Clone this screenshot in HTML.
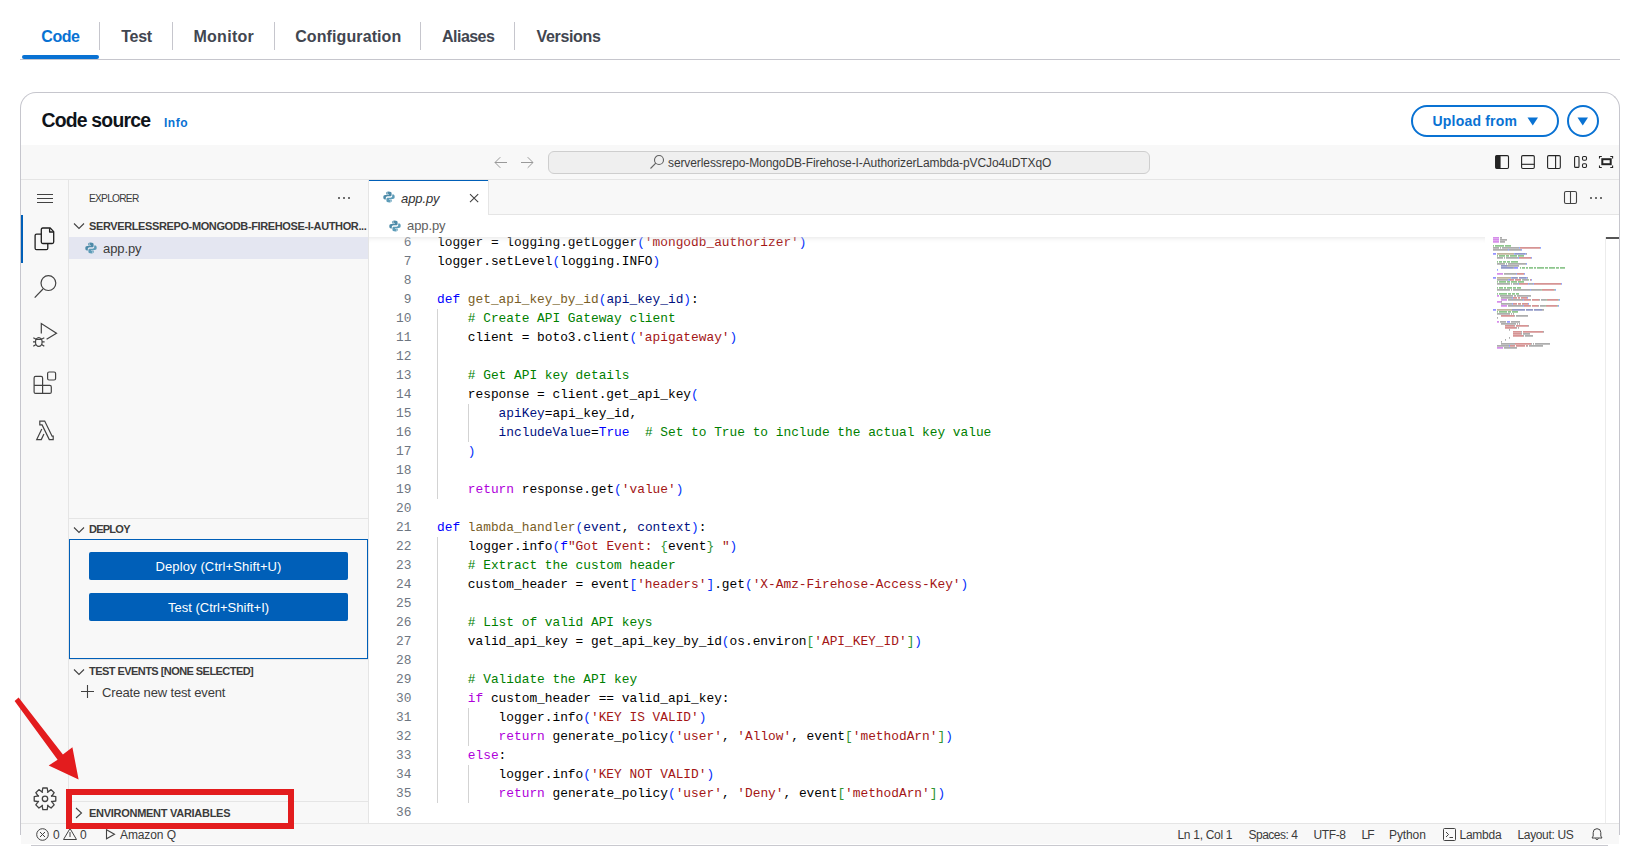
<!DOCTYPE html>
<html><head><meta charset="utf-8"><style>
html,body{margin:0;padding:0;background:#fff;}
body{width:1636px;height:859px;position:relative;overflow:hidden;font-family:"Liberation Sans", sans-serif;}
.t{position:absolute;white-space:pre;}
.code{position:absolute;font-family:"Liberation Mono", monospace;white-space:pre;}
</style></head><body>
<div class="t" style="left:41.3px;top:28.86px;font-size:16px;line-height:16px;color:#0972d3;font-weight:bold;letter-spacing:-0.45px;font-style:normal;">Code</div>
<div class="t" style="left:121.3px;top:28.86px;font-size:16px;line-height:16px;color:#424650;font-weight:bold;letter-spacing:-0.3px;font-style:normal;">Test</div>
<div class="t" style="left:193.4px;top:28.86px;font-size:16px;line-height:16px;color:#424650;font-weight:bold;letter-spacing:0.3px;font-style:normal;">Monitor</div>
<div class="t" style="left:295.2px;top:28.86px;font-size:16px;line-height:16px;color:#424650;font-weight:bold;letter-spacing:0.1px;font-style:normal;">Configuration</div>
<div class="t" style="left:442.1px;top:28.86px;font-size:16px;line-height:16px;color:#424650;font-weight:bold;letter-spacing:-0.55px;font-style:normal;">Aliases</div>
<div class="t" style="left:536.6px;top:28.86px;font-size:16px;line-height:16px;color:#424650;font-weight:bold;letter-spacing:-0.35px;font-style:normal;">Versions</div>
<div style="position:absolute;left:99px;top:22px;width:1px;height:28px;background:#c6c6cd;"></div>
<div style="position:absolute;left:172px;top:22px;width:1px;height:28px;background:#c6c6cd;"></div>
<div style="position:absolute;left:274px;top:22px;width:1px;height:28px;background:#c6c6cd;"></div>
<div style="position:absolute;left:420px;top:22px;width:1px;height:28px;background:#c6c6cd;"></div>
<div style="position:absolute;left:514px;top:22px;width:1px;height:28px;background:#c6c6cd;"></div>
<div style="position:absolute;left:20px;top:59px;width:1600px;height:1px;background:#c6c6cd;"></div>
<div style="position:absolute;left:22px;top:55px;width:77px;height:4px;background:#0972d3;border-radius:2px"></div>
<div style="position:absolute;left:20px;top:92px;width:1598px;height:742px;border:1px solid #c6c6cd;border-bottom:none;border-radius:16px 16px 0 0;background:#fff"></div>
<div class="t" style="left:41.5px;top:111.18px;font-size:19.4px;line-height:19.4px;color:#0f141a;font-weight:bold;letter-spacing:-0.8px;font-style:normal;">Code source</div>
<div class="t" style="left:164.0px;top:116.54px;font-size:12px;line-height:12px;color:#0972d3;font-weight:bold;letter-spacing:0.5px;font-style:normal;">Info</div>
<div style="position:absolute;left:1411px;top:105px;width:144px;height:28px;border:2px solid #0972d3;border-radius:16px"></div>
<div class="t" style="left:1432.5px;top:113.85px;font-size:14px;line-height:14px;color:#0972d3;font-weight:bold;letter-spacing:0.2px;font-style:normal;">Upload from</div>
<svg style="position:absolute;left:1527px;top:117px" width="12" height="9"><path d="M0.5 0.5 H11 L5.75 8.5 Z" fill="#0972d3"/></svg>
<div style="position:absolute;left:1567px;top:105px;width:28px;height:28px;border:2px solid #0972d3;border-radius:50%"></div>
<svg style="position:absolute;left:1577px;top:117px" width="12" height="9"><path d="M0.5 0.5 H11 L5.75 8.5 Z" fill="#0972d3"/></svg>
<div style="position:absolute;left:21px;top:145px;width:1598px;height:678px;background:#f8f8f8;"></div>
<div style="position:absolute;left:21px;top:179px;width:1598px;height:1px;background:#e5e5e5;"></div>
<svg style="position:absolute;left:492px;top:154px" width="46" height="18" fill="none" stroke="#999" stroke-width="1"><path d="M3 8.5 H15 M3 8.5 L8.3 3.2 M3 8.5 L8.3 13.8"/><path d="M29 8.5 H41 M41 8.5 L35.7 3.2 M41 8.5 L35.7 13.8"/></svg>
<div style="position:absolute;left:548px;top:151px;width:600px;height:21px;border:1px solid #cecece;border-radius:6px;background:#efefef"></div>
<svg style="position:absolute;left:649px;top:154px" width="16" height="16" fill="none" stroke="#616161" stroke-width="1.1"><circle cx="10" cy="6" r="4.5"/><path d="M6.8 9.2 L1.5 14.5"/></svg>
<div class="t" style="left:668.0px;top:157.14px;font-size:12px;line-height:12px;color:#3b3b3b;font-weight:normal;letter-spacing:-0.1px;font-style:normal;">serverlessrepo-MongoDB-Firehose-I-AuthorizerLambda-pVCJo4uDTXqO</div>
<svg style="position:absolute;left:1490px;top:150px" width="130" height="25" fill="none" stroke="#242424" stroke-width="1.1">
<rect x="5.6" y="5.6" width="12.9" height="12.9" rx="1.2"/><rect x="5.6" y="5.6" width="5" height="12.9" fill="#242424" stroke="none" rx="0.8"/>
<rect x="31.6" y="5.6" width="12.7" height="12.9" rx="1.2"/><path d="M31.6 14.3 H44.3"/>
<rect x="57.6" y="5.6" width="12.7" height="12.9" rx="1.2"/><path d="M65.6 5.6 V18.5"/>
<rect x="84.6" y="6.5" width="4.4" height="10.9" rx="1"/><rect x="92.5" y="6.5" width="4" height="3.8" rx="1.2"/><rect x="92.5" y="13.7" width="4" height="3.8" rx="1.2"/>
<path d="M109.5 8.5 V6.5 H111.8 M120.3 6.5 H122.6 V8.5 M122.6 15.5 V17.5 H120.3 M111.8 17.5 H109.5 V15.5"/><rect x="112.3" y="9.2" width="8.4" height="5" stroke-width="2"/>
</svg>
<div style="position:absolute;left:68px;top:180px;width:1px;height:643px;background:#e5e5e5;"></div>
<div style="position:absolute;left:368px;top:180px;width:1px;height:643px;background:#e5e5e5;"></div>
<div style="position:absolute;left:21px;top:215px;width:2px;height:48px;background:#005fb8;"></div>
<svg style="position:absolute;left:36px;top:192px" width="18" height="13" fill="none" stroke="#424242" stroke-width="1.1"><path d="M1 2.5 H17 M1 6.5 H17 M1 10.5 H17"/></svg>
<svg style="position:absolute;left:28px;top:222px" width="34" height="34" fill="none" stroke="#1f1f1f" stroke-width="1.3" stroke-linejoin="round"><path d="M13.3 12.1 H8.6 Q7.1 12.1 7.1 13.6 V26.2 Q7.1 27.7 8.6 27.7 H18.3 Q19.8 27.7 19.8 26.2 V21.5"/><path d="M14.8 6 H22.2 L25.7 9.6 V20 Q25.7 21.5 24.2 21.5 H14.8 Q13.3 21.5 13.3 20 V7.5 Q13.3 6 14.8 6 Z"/><path d="M21.6 6.2 V10 H25.5"/></svg>
<svg style="position:absolute;left:28px;top:270px" width="34" height="34" fill="none" stroke="#424242" stroke-width="1.2"><circle cx="20.4" cy="13.1" r="7.4"/><path d="M15 19 L6.7 27.6"/></svg>
<svg style="position:absolute;left:28px;top:318px" width="34" height="34" fill="none" stroke="#424242" stroke-width="1.2"><path d="M13.3 15.4 V5.6 L28.5 15.2 L18.6 21.3"/><ellipse cx="10.8" cy="24" rx="3.3" ry="4.4"/><path d="M7.7 21.4 H13.9"/><path d="M5.3 19.8 L8.2 21.2 M16.3 19.8 L13.4 21.2 M5 23.9 H7.5 M14.1 23.9 H16.6 M5.3 28.3 L8 26.4 M16.3 28.3 L13.6 26.4"/></svg>
<svg style="position:absolute;left:28px;top:366px" width="34" height="34" fill="none" stroke="#424242" stroke-width="1.2" stroke-linejoin="round"><path d="M7.6 10.4 H13.1 Q14.6 10.4 14.6 11.9 V19.4 H21.8 Q23.3 19.4 23.3 20.9 V25.9 Q23.3 27.4 21.8 27.4 H7.6 Q6.1 27.4 6.1 25.9 V11.9 Q6.1 10.4 7.6 10.4 Z"/><path d="M6.1 19.4 H14.6 V27.4"/><rect x="19.6" y="6" width="8" height="8" rx="1.5"/></svg>
<svg style="position:absolute;left:28px;top:414px" width="34" height="34" fill="none" stroke="#424242" stroke-width="1.2" stroke-linejoin="miter"><path d="M11.8 7.1 H16.7 L24.1 22.2 H25.2 V25.6 H21.3 L14.1 10.9 H11.8 Z"/><path d="M13.8 14.9 L8.7 25.6 H13.3 L15.9 19.9"/></svg>
<svg style="position:absolute;left:28px;top:782px" width="34" height="34" fill="none" stroke="#424242" stroke-width="1.3" stroke-linejoin="round"><path d="M14.10 10.32 L14.80 6.02 L19.20 6.02 L19.90 10.32 L19.53 10.17 L23.07 7.62 L26.18 10.73 L23.63 14.27 L23.48 13.90 L27.78 14.60 L27.78 19.00 L23.48 19.70 L23.63 19.33 L26.18 22.87 L23.07 25.98 L19.53 23.43 L19.90 23.28 L19.20 27.58 L14.80 27.58 L14.10 23.28 L14.47 23.43 L10.93 25.98 L7.82 22.87 L10.37 19.33 L10.52 19.70 L6.22 19.00 L6.22 14.60 L10.52 13.90 L10.37 14.27 L7.82 10.73 L10.93 7.62 L14.47 10.17 Z"/><circle cx="17" cy="16.8" r="2.7"/></svg>
<div class="t" style="left:89.0px;top:194.17px;font-size:10.2px;line-height:10.2px;color:#3b3b3b;font-weight:normal;letter-spacing:-0.75px;font-style:normal;">EXPLORER</div>
<svg style="position:absolute;left:337px;top:196px" width="16" height="4"><circle cx="2" cy="2" r="1" fill="#424242"/><circle cx="7" cy="2" r="1" fill="#424242"/><circle cx="12" cy="2" r="1" fill="#424242"/></svg>
<svg style="position:absolute;left:73px;top:222px" width="12" height="8" fill="none" stroke="#424242" stroke-width="1.1"><path d="M1 1.5 L6 6.5 L11 1.5"/></svg>
<div class="t" style="left:89.0px;top:220.69px;font-size:11px;line-height:11px;color:#3b3b3b;font-weight:bold;letter-spacing:-0.38px;font-style:normal;">SERVERLESSREPO-MONGODB-FIREHOSE-I-AUTHOR...</div>
<div style="position:absolute;left:69px;top:237px;width:299px;height:22px;background:#e4e6f1;"></div>
<svg style="position:absolute;left:85px;top:242px" width="12" height="12" viewBox="0 0 12 12">
<path d="M5.5 0.5 C3.5 0.5 3.3 1.4 3.3 2.2 V3.4 H6 V4 H2.2 C1 4 0.3 4.8 0.3 6.2 C0.3 7.8 1 8.4 2 8.4 H2.8 V7 C2.8 6 3.6 5.3 4.5 5.3 H7.2 C8 5.3 8.6 4.7 8.6 3.9 V2.2 C8.6 1.3 7.8 0.5 5.5 0.5 Z" fill="#4d8aa8"/>
<path d="M6.5 11.5 C8.5 11.5 8.7 10.6 8.7 9.8 V8.6 H6 V8 H9.8 C11 8 11.7 7.2 11.7 5.8 C11.7 4.2 11 3.6 10 3.6 H9.2 V5 C9.2 6 8.4 6.7 7.5 6.7 H4.8 C4 6.7 3.4 7.3 3.4 8.1 V9.8 C3.4 10.7 4.2 11.5 6.5 11.5 Z" fill="#5d9cb8"/>
<circle cx="4.6" cy="1.9" r="0.5" fill="#fff"/><circle cx="7.4" cy="10.1" r="0.5" fill="#fff"/></svg>
<div class="t" style="left:103.0px;top:241.60px;font-size:13px;line-height:13px;color:#3b3b3b;font-weight:normal;letter-spacing:-0.1px;font-style:normal;">app.py</div>
<div style="position:absolute;left:69px;top:518px;width:299px;height:1px;background:#e5e5e5;"></div>
<svg style="position:absolute;left:73px;top:526px" width="12" height="8" fill="none" stroke="#424242" stroke-width="1.1"><path d="M1 1.5 L6 6.5 L11 1.5"/></svg>
<div class="t" style="left:89.0px;top:524.09px;font-size:11px;line-height:11px;color:#3b3b3b;font-weight:bold;letter-spacing:-0.75px;font-style:normal;">DEPLOY</div>
<div style="position:absolute;left:69px;top:539px;width:297px;height:118px;border:1px solid #005fb8"></div>
<div style="position:absolute;left:89px;top:552px;width:259px;height:28px;background:#005fb8;border-radius:2px"></div>
<div style="position:absolute;left:89px;top:593px;width:259px;height:28px;background:#005fb8;border-radius:2px"></div>
<div class="t" style="left:155.5px;top:559.80px;font-size:13px;line-height:13px;color:#fff;font-weight:normal;letter-spacing:0.12px;font-style:normal;">Deploy (Ctrl+Shift+U)</div>
<div class="t" style="left:168.0px;top:600.60px;font-size:13px;line-height:13px;color:#fff;font-weight:normal;letter-spacing:0px;font-style:normal;">Test (Ctrl+Shift+I)</div>
<div style="position:absolute;left:69px;top:659px;width:299px;height:1px;background:#e5e5e5;"></div>
<svg style="position:absolute;left:73px;top:668px" width="12" height="8" fill="none" stroke="#424242" stroke-width="1.1"><path d="M1 1.5 L6 6.5 L11 1.5"/></svg>
<div class="t" style="left:89.0px;top:665.69px;font-size:11px;line-height:11px;color:#3b3b3b;font-weight:bold;letter-spacing:-0.55px;font-style:normal;">TEST EVENTS [NONE SELECTED]</div>
<svg style="position:absolute;left:80px;top:684px" width="15" height="15" fill="none" stroke="#424242" stroke-width="1.1"><path d="M7.5 1 V14 M1 7.5 H14"/></svg>
<div class="t" style="left:102.0px;top:685.60px;font-size:13px;line-height:13px;color:#3b3b3b;font-weight:normal;letter-spacing:-0.15px;font-style:normal;">Create new test event</div>
<div style="position:absolute;left:69px;top:801px;width:299px;height:1px;background:#e5e5e5;"></div>
<svg style="position:absolute;left:74px;top:807px" width="10" height="12" fill="none" stroke="#424242" stroke-width="1.1"><path d="M2 1 L7.5 6 L2 11"/></svg>
<div class="t" style="left:89.0px;top:807.69px;font-size:11px;line-height:11px;color:#3b3b3b;font-weight:bold;letter-spacing:-0.28px;font-style:normal;">ENVIRONMENT VARIABLES</div>
<div style="position:absolute;left:369px;top:214px;width:1250px;height:1px;background:#e5e5e5;"></div>
<div style="position:absolute;left:369px;top:180px;width:120px;height:35px;background:#fff;border-right:1px solid #e5e5e5;box-sizing:border-box"></div>
<div style="position:absolute;left:369px;top:180px;width:119px;height:1px;background:#005fb8;"></div>
<svg style="position:absolute;left:383px;top:191px" width="12" height="12" viewBox="0 0 12 12">
<path d="M5.5 0.5 C3.5 0.5 3.3 1.4 3.3 2.2 V3.4 H6 V4 H2.2 C1 4 0.3 4.8 0.3 6.2 C0.3 7.8 1 8.4 2 8.4 H2.8 V7 C2.8 6 3.6 5.3 4.5 5.3 H7.2 C8 5.3 8.6 4.7 8.6 3.9 V2.2 C8.6 1.3 7.8 0.5 5.5 0.5 Z" fill="#4d8aa8"/>
<path d="M6.5 11.5 C8.5 11.5 8.7 10.6 8.7 9.8 V8.6 H6 V8 H9.8 C11 8 11.7 7.2 11.7 5.8 C11.7 4.2 11 3.6 10 3.6 H9.2 V5 C9.2 6 8.4 6.7 7.5 6.7 H4.8 C4 6.7 3.4 7.3 3.4 8.1 V9.8 C3.4 10.7 4.2 11.5 6.5 11.5 Z" fill="#5d9cb8"/>
<circle cx="4.6" cy="1.9" r="0.5" fill="#fff"/><circle cx="7.4" cy="10.1" r="0.5" fill="#fff"/></svg>
<div class="t" style="left:401.0px;top:191.60px;font-size:13px;line-height:13px;color:#333;font-weight:normal;letter-spacing:-0.1px;font-style:italic;">app.py</div>
<svg style="position:absolute;left:468px;top:192px" width="12" height="12" fill="none" stroke="#424242" stroke-width="1.1"><path d="M2 2.2 L10.2 10.2 M10.2 2.2 L2 10.2"/></svg>
<svg style="position:absolute;left:1563px;top:190px" width="15" height="15" fill="none" stroke="#424242" stroke-width="1.1"><rect x="1.5" y="1.5" width="12" height="12" rx="1.5"/><path d="M7.5 1.5 V13.5"/></svg>
<svg style="position:absolute;left:1589px;top:196px" width="16" height="4"><circle cx="2" cy="2" r="1" fill="#424242"/><circle cx="7" cy="2" r="1" fill="#424242"/><circle cx="12" cy="2" r="1" fill="#424242"/></svg>
<div style="position:absolute;left:369px;top:215px;width:1250px;height:608px;background:#fff;"></div>
<svg style="position:absolute;left:389px;top:220px" width="12" height="12" viewBox="0 0 12 12">
<path d="M5.5 0.5 C3.5 0.5 3.3 1.4 3.3 2.2 V3.4 H6 V4 H2.2 C1 4 0.3 4.8 0.3 6.2 C0.3 7.8 1 8.4 2 8.4 H2.8 V7 C2.8 6 3.6 5.3 4.5 5.3 H7.2 C8 5.3 8.6 4.7 8.6 3.9 V2.2 C8.6 1.3 7.8 0.5 5.5 0.5 Z" fill="#4d8aa8"/>
<path d="M6.5 11.5 C8.5 11.5 8.7 10.6 8.7 9.8 V8.6 H6 V8 H9.8 C11 8 11.7 7.2 11.7 5.8 C11.7 4.2 11 3.6 10 3.6 H9.2 V5 C9.2 6 8.4 6.7 7.5 6.7 H4.8 C4 6.7 3.4 7.3 3.4 8.1 V9.8 C3.4 10.7 4.2 11.5 6.5 11.5 Z" fill="#5d9cb8"/>
<circle cx="4.6" cy="1.9" r="0.5" fill="#fff"/><circle cx="7.4" cy="10.1" r="0.5" fill="#fff"/></svg>
<div class="t" style="left:407.0px;top:219.10px;font-size:13px;line-height:13px;color:#616161;font-weight:normal;letter-spacing:-0.1px;font-style:normal;">app.py</div>
<div style="position:absolute;left:369px;top:237px;width:1236px;height:586px;overflow:hidden">
<div class="code" style="left:68px;top:-4px;font-size:12.833px;line-height:19px"><div style="height:19px"><span style="color:#000000">logger = logging.getLogger</span><span style="color:#0431fa">(</span><span style="color:#a31515">&#x27;mongodb_authorizer&#x27;</span><span style="color:#0431fa">)</span></div><div style="height:19px"><span style="color:#000000">logger.setLevel</span><span style="color:#0431fa">(</span><span style="color:#000000">logging.INFO</span><span style="color:#0431fa">)</span></div><div style="height:19px"></div><div style="height:19px"><span style="color:#0000ff">def </span><span style="color:#795e26">get_api_key_by_id</span><span style="color:#0431fa">(</span><span style="color:#001080">api_key_id</span><span style="color:#0431fa">)</span><span style="color:#000000">:</span></div><div style="height:19px"><span style="color:#000000">    </span><span style="color:#008000"># Create API Gateway client</span></div><div style="height:19px"><span style="color:#000000">    client = boto3.client</span><span style="color:#0431fa">(</span><span style="color:#a31515">&#x27;apigateway&#x27;</span><span style="color:#0431fa">)</span></div><div style="height:19px"></div><div style="height:19px"><span style="color:#000000">    </span><span style="color:#008000"># Get API key details</span></div><div style="height:19px"><span style="color:#000000">    response = client.get_api_key</span><span style="color:#0431fa">(</span></div><div style="height:19px"><span style="color:#000000">        </span><span style="color:#001080">apiKey</span><span style="color:#000000">=api_key_id,</span></div><div style="height:19px"><span style="color:#000000">        </span><span style="color:#001080">includeValue</span><span style="color:#000000">=</span><span style="color:#0000ff">True</span><span style="color:#000000">  </span><span style="color:#008000"># Set to True to include the actual key value</span></div><div style="height:19px"><span style="color:#000000">    </span><span style="color:#0431fa">)</span></div><div style="height:19px"></div><div style="height:19px"><span style="color:#000000">    </span><span style="color:#af00db">return</span><span style="color:#000000"> response.get</span><span style="color:#0431fa">(</span><span style="color:#a31515">&#x27;value&#x27;</span><span style="color:#0431fa">)</span></div><div style="height:19px"></div><div style="height:19px"><span style="color:#0000ff">def </span><span style="color:#795e26">lambda_handler</span><span style="color:#0431fa">(</span><span style="color:#001080">event</span><span style="color:#000000">, </span><span style="color:#001080">context</span><span style="color:#0431fa">)</span><span style="color:#000000">:</span></div><div style="height:19px"><span style="color:#000000">    logger.info</span><span style="color:#0431fa">(</span><span style="color:#0000ff">f</span><span style="color:#a31515">&quot;Got Event: </span><span style="color:#319331">{</span><span style="color:#000000">event</span><span style="color:#319331">}</span><span style="color:#a31515"> &quot;</span><span style="color:#0431fa">)</span></div><div style="height:19px"><span style="color:#000000">    </span><span style="color:#008000"># Extract the custom header</span></div><div style="height:19px"><span style="color:#000000">    custom_header = event</span><span style="color:#0431fa">[</span><span style="color:#a31515">&#x27;headers&#x27;</span><span style="color:#0431fa">]</span><span style="color:#000000">.get</span><span style="color:#0431fa">(</span><span style="color:#a31515">&#x27;X-Amz-Firehose-Access-Key&#x27;</span><span style="color:#0431fa">)</span></div><div style="height:19px"></div><div style="height:19px"><span style="color:#000000">    </span><span style="color:#008000"># List of valid API keys</span></div><div style="height:19px"><span style="color:#000000">    valid_api_key = get_api_key_by_id</span><span style="color:#0431fa">(</span><span style="color:#000000">os.environ</span><span style="color:#319331">[</span><span style="color:#a31515">&#x27;API_KEY_ID&#x27;</span><span style="color:#319331">]</span><span style="color:#0431fa">)</span></div><div style="height:19px"></div><div style="height:19px"><span style="color:#000000">    </span><span style="color:#008000"># Validate the API key</span></div><div style="height:19px"><span style="color:#000000">    </span><span style="color:#af00db">if</span><span style="color:#000000"> custom_header == valid_api_key:</span></div><div style="height:19px"><span style="color:#000000">        logger.info</span><span style="color:#0431fa">(</span><span style="color:#a31515">&#x27;KEY IS VALID&#x27;</span><span style="color:#0431fa">)</span></div><div style="height:19px"><span style="color:#000000">        </span><span style="color:#af00db">return</span><span style="color:#000000"> generate_policy</span><span style="color:#0431fa">(</span><span style="color:#a31515">&#x27;user&#x27;</span><span style="color:#000000">, </span><span style="color:#a31515">&#x27;Allow&#x27;</span><span style="color:#000000">, event</span><span style="color:#319331">[</span><span style="color:#a31515">&#x27;methodArn&#x27;</span><span style="color:#319331">]</span><span style="color:#0431fa">)</span></div><div style="height:19px"><span style="color:#000000">    </span><span style="color:#af00db">else</span><span style="color:#000000">:</span></div><div style="height:19px"><span style="color:#000000">        logger.info</span><span style="color:#0431fa">(</span><span style="color:#a31515">&#x27;KEY NOT VALID&#x27;</span><span style="color:#0431fa">)</span></div><div style="height:19px"><span style="color:#000000">        </span><span style="color:#af00db">return</span><span style="color:#000000"> generate_policy</span><span style="color:#0431fa">(</span><span style="color:#a31515">&#x27;user&#x27;</span><span style="color:#000000">, </span><span style="color:#a31515">&#x27;Deny&#x27;</span><span style="color:#000000">, event</span><span style="color:#319331">[</span><span style="color:#a31515">&#x27;methodArn&#x27;</span><span style="color:#319331">]</span><span style="color:#0431fa">)</span></div><div style="height:19px"></div></div>
<div class="code" style="left:0px;width:42.5px;text-align:right;top:-4px;font-size:12.833px;line-height:19px;color:#6e7681"><div style="height:19px">6</div><div style="height:19px">7</div><div style="height:19px">8</div><div style="height:19px">9</div><div style="height:19px">10</div><div style="height:19px">11</div><div style="height:19px">12</div><div style="height:19px">13</div><div style="height:19px">14</div><div style="height:19px">15</div><div style="height:19px">16</div><div style="height:19px">17</div><div style="height:19px">18</div><div style="height:19px">19</div><div style="height:19px">20</div><div style="height:19px">21</div><div style="height:19px">22</div><div style="height:19px">23</div><div style="height:19px">24</div><div style="height:19px">25</div><div style="height:19px">26</div><div style="height:19px">27</div><div style="height:19px">28</div><div style="height:19px">29</div><div style="height:19px">30</div><div style="height:19px">31</div><div style="height:19px">32</div><div style="height:19px">33</div><div style="height:19px">34</div><div style="height:19px">35</div><div style="height:19px">36</div></div>
<div style="position:absolute;left:68px;top:72px;width:1px;height:190px;background:#d3d3d3"></div>
<div style="position:absolute;left:68px;top:300px;width:1px;height:266px;background:#d3d3d3"></div>
<div style="position:absolute;left:99px;top:167px;width:1px;height:38px;background:#d3d3d3"></div>
<div style="position:absolute;left:99px;top:471px;width:1px;height:38px;background:#d3d3d3"></div>
<div style="position:absolute;left:99px;top:528px;width:1px;height:38px;background:#d3d3d3"></div>
</div>
<div style="position:absolute;left:369px;top:237px;width:1116px;height:6px;box-shadow:inset 0 6px 6px -6px #dddddd"></div>
<div style="position:absolute;left:1605px;top:237px;width:1px;height:586px;background:#ececec;"></div>
<div style="position:absolute;left:1606px;top:237px;width:13px;height:2px;background:#555;"></div>
<svg style="position:absolute;left:1493px;top:237px;opacity:0.8" width="110" height="114"><rect x="0" y="0.2" width="6" height="1.4" fill="#c050e0"/><rect x="7" y="0.2" width="2" height="1.4" fill="#808080"/><rect x="0" y="2.2" width="6" height="1.4" fill="#c050e0"/><rect x="7" y="2.2" width="7" height="1.4" fill="#808080"/><rect x="0" y="4.2" width="6" height="1.4" fill="#c050e0"/><rect x="7" y="4.2" width="5" height="1.4" fill="#808080"/><rect x="0" y="8.2" width="1" height="1.4" fill="#50a850"/><rect x="2" y="8.2" width="9" height="1.4" fill="#50a850"/><rect x="12" y="8.2" width="6" height="1.4" fill="#50a850"/><rect x="0" y="72.2" width="3" height="1.4" fill="#5a5aff"/><rect x="4" y="72.2" width="15" height="1.4" fill="#a08c66"/><rect x="19" y="72.2" width="13" height="1.4" fill="#5560a8"/><rect x="33" y="72.2" width="7" height="1.4" fill="#5560a8"/><rect x="41" y="72.2" width="8" height="1.4" fill="#5560a8"/><rect x="49" y="72.2" width="2" height="1.4" fill="#808080"/><rect x="4" y="74.2" width="1" height="1.4" fill="#50a850"/><rect x="6" y="74.2" width="8" height="1.4" fill="#50a850"/><rect x="15" y="74.2" width="3" height="1.4" fill="#50a850"/><rect x="19" y="74.2" width="6" height="1.4" fill="#50a850"/><rect x="4" y="76.2" width="13" height="1.4" fill="#808080"/><rect x="18" y="76.2" width="1" height="1.4" fill="#808080"/><rect x="20" y="76.2" width="1" height="1.4" fill="#808080"/><rect x="8" y="78.2" width="13" height="1.4" fill="#c05a5a"/><rect x="21" y="78.2" width="1" height="1.4" fill="#808080"/><rect x="23" y="78.2" width="12" height="1.4" fill="#808080"/><rect x="4" y="80.2" width="1" height="1.4" fill="#808080"/><rect x="4" y="84.2" width="2" height="1.4" fill="#c050e0"/><rect x="7" y="84.2" width="6" height="1.4" fill="#808080"/><rect x="14" y="84.2" width="3" height="1.4" fill="#5a5aff"/><rect x="18" y="84.2" width="9" height="1.4" fill="#808080"/><rect x="8" y="86.2" width="15" height="1.4" fill="#808080"/><rect x="24" y="86.2" width="1" height="1.4" fill="#808080"/><rect x="26" y="86.2" width="1" height="1.4" fill="#808080"/><rect x="12" y="88.2" width="9" height="1.4" fill="#c05a5a"/><rect x="21" y="88.2" width="1" height="1.4" fill="#808080"/><rect x="23" y="88.2" width="12" height="1.4" fill="#c05a5a"/><rect x="35" y="88.2" width="1" height="1.4" fill="#808080"/><rect x="12" y="90.2" width="11" height="1.4" fill="#c05a5a"/><rect x="23" y="90.2" width="1" height="1.4" fill="#808080"/><rect x="25" y="90.2" width="1" height="1.4" fill="#808080"/><rect x="16" y="92.2" width="1" height="1.4" fill="#808080"/><rect x="20" y="94.2" width="8" height="1.4" fill="#c05a5a"/><rect x="28" y="94.2" width="1" height="1.4" fill="#808080"/><rect x="30" y="94.2" width="20" height="1.4" fill="#c05a5a"/><rect x="50" y="94.2" width="1" height="1.4" fill="#808080"/><rect x="20" y="96.2" width="8" height="1.4" fill="#c05a5a"/><rect x="28" y="96.2" width="1" height="1.4" fill="#808080"/><rect x="30" y="96.2" width="7" height="1.4" fill="#808080"/><rect x="20" y="98.2" width="10" height="1.4" fill="#c05a5a"/><rect x="30" y="98.2" width="1" height="1.4" fill="#808080"/><rect x="32" y="98.2" width="8" height="1.4" fill="#808080"/><rect x="16" y="100.2" width="1" height="1.4" fill="#808080"/><rect x="12" y="102.2" width="1" height="1.4" fill="#808080"/><rect x="8" y="104.2" width="1" height="1.4" fill="#808080"/><rect x="8" y="106.2" width="14" height="1.4" fill="#808080"/><rect x="22" y="106.2" width="16" height="1.4" fill="#c05a5a"/><rect x="38" y="106.2" width="1" height="1.4" fill="#808080"/><rect x="40" y="106.2" width="1" height="1.4" fill="#808080"/><rect x="42" y="106.2" width="15" height="1.4" fill="#808080"/><rect x="4" y="108.2" width="12" height="1.4" fill="#808080"/><rect x="16" y="108.2" width="1" height="1.4" fill="#5a5aff"/><rect x="17" y="108.2" width="5" height="1.4" fill="#c05a5a"/><rect x="23" y="108.2" width="9" height="1.4" fill="#c05a5a"/><rect x="33" y="108.2" width="1" height="1.4" fill="#c05a5a"/><rect x="34" y="108.2" width="1" height="1.4" fill="#808080"/><rect x="36" y="108.2" width="14" height="1.4" fill="#808080"/><rect x="4" y="110.2" width="6" height="1.4" fill="#c050e0"/><rect x="11" y="110.2" width="13" height="1.4" fill="#808080"/><rect x="0" y="10.2" width="6" height="1.4" fill="#808080"/><rect x="7" y="10.2" width="1" height="1.4" fill="#808080"/><rect x="9" y="10.2" width="17" height="1.4" fill="#808080"/><rect x="26" y="10.2" width="1" height="1.4" fill="#5a78fc"/><rect x="27" y="10.2" width="20" height="1.4" fill="#c05a5a"/><rect x="47" y="10.2" width="1" height="1.4" fill="#5a78fc"/><rect x="0" y="12.2" width="15" height="1.4" fill="#808080"/><rect x="15" y="12.2" width="1" height="1.4" fill="#5a78fc"/><rect x="16" y="12.2" width="12" height="1.4" fill="#808080"/><rect x="28" y="12.2" width="1" height="1.4" fill="#5a78fc"/><rect x="0" y="16.2" width="3" height="1.4" fill="#5a5aff"/><rect x="4" y="16.2" width="17" height="1.4" fill="#a08c66"/><rect x="21" y="16.2" width="1" height="1.4" fill="#5a78fc"/><rect x="22" y="16.2" width="10" height="1.4" fill="#5560a8"/><rect x="32" y="16.2" width="1" height="1.4" fill="#5a78fc"/><rect x="33" y="16.2" width="1" height="1.4" fill="#808080"/><rect x="4" y="18.2" width="1" height="1.4" fill="#50a850"/><rect x="6" y="18.2" width="6" height="1.4" fill="#50a850"/><rect x="13" y="18.2" width="3" height="1.4" fill="#50a850"/><rect x="17" y="18.2" width="7" height="1.4" fill="#50a850"/><rect x="25" y="18.2" width="6" height="1.4" fill="#50a850"/><rect x="4" y="20.2" width="6" height="1.4" fill="#808080"/><rect x="11" y="20.2" width="1" height="1.4" fill="#808080"/><rect x="13" y="20.2" width="12" height="1.4" fill="#808080"/><rect x="25" y="20.2" width="1" height="1.4" fill="#5a78fc"/><rect x="26" y="20.2" width="12" height="1.4" fill="#c05a5a"/><rect x="38" y="20.2" width="1" height="1.4" fill="#5a78fc"/><rect x="4" y="24.2" width="1" height="1.4" fill="#50a850"/><rect x="6" y="24.2" width="3" height="1.4" fill="#50a850"/><rect x="10" y="24.2" width="3" height="1.4" fill="#50a850"/><rect x="14" y="24.2" width="3" height="1.4" fill="#50a850"/><rect x="18" y="24.2" width="7" height="1.4" fill="#50a850"/><rect x="4" y="26.2" width="8" height="1.4" fill="#808080"/><rect x="13" y="26.2" width="1" height="1.4" fill="#808080"/><rect x="15" y="26.2" width="18" height="1.4" fill="#808080"/><rect x="33" y="26.2" width="1" height="1.4" fill="#5a78fc"/><rect x="8" y="28.2" width="6" height="1.4" fill="#5560a8"/><rect x="14" y="28.2" width="12" height="1.4" fill="#808080"/><rect x="8" y="30.2" width="12" height="1.4" fill="#5560a8"/><rect x="20" y="30.2" width="1" height="1.4" fill="#808080"/><rect x="21" y="30.2" width="4" height="1.4" fill="#5a5aff"/><rect x="27" y="30.2" width="1" height="1.4" fill="#50a850"/><rect x="29" y="30.2" width="3" height="1.4" fill="#50a850"/><rect x="33" y="30.2" width="2" height="1.4" fill="#50a850"/><rect x="36" y="30.2" width="4" height="1.4" fill="#50a850"/><rect x="41" y="30.2" width="2" height="1.4" fill="#50a850"/><rect x="44" y="30.2" width="7" height="1.4" fill="#50a850"/><rect x="52" y="30.2" width="3" height="1.4" fill="#50a850"/><rect x="56" y="30.2" width="6" height="1.4" fill="#50a850"/><rect x="63" y="30.2" width="3" height="1.4" fill="#50a850"/><rect x="67" y="30.2" width="5" height="1.4" fill="#50a850"/><rect x="4" y="32.2" width="1" height="1.4" fill="#5a78fc"/><rect x="4" y="36.2" width="6" height="1.4" fill="#c050e0"/><rect x="11" y="36.2" width="12" height="1.4" fill="#808080"/><rect x="23" y="36.2" width="1" height="1.4" fill="#5a78fc"/><rect x="24" y="36.2" width="7" height="1.4" fill="#c05a5a"/><rect x="31" y="36.2" width="1" height="1.4" fill="#5a78fc"/><rect x="0" y="40.2" width="3" height="1.4" fill="#5a5aff"/><rect x="4" y="40.2" width="14" height="1.4" fill="#a08c66"/><rect x="18" y="40.2" width="1" height="1.4" fill="#5a78fc"/><rect x="19" y="40.2" width="5" height="1.4" fill="#5560a8"/><rect x="24" y="40.2" width="1" height="1.4" fill="#808080"/><rect x="26" y="40.2" width="7" height="1.4" fill="#5560a8"/><rect x="33" y="40.2" width="1" height="1.4" fill="#5a78fc"/><rect x="34" y="40.2" width="1" height="1.4" fill="#808080"/><rect x="4" y="42.2" width="11" height="1.4" fill="#808080"/><rect x="15" y="42.2" width="1" height="1.4" fill="#5a78fc"/><rect x="16" y="42.2" width="1" height="1.4" fill="#5a5aff"/><rect x="17" y="42.2" width="4" height="1.4" fill="#c05a5a"/><rect x="22" y="42.2" width="6" height="1.4" fill="#c05a5a"/><rect x="29" y="42.2" width="1" height="1.4" fill="#70b070"/><rect x="30" y="42.2" width="5" height="1.4" fill="#808080"/><rect x="35" y="42.2" width="1" height="1.4" fill="#70b070"/><rect x="37" y="42.2" width="1" height="1.4" fill="#c05a5a"/><rect x="38" y="42.2" width="1" height="1.4" fill="#5a78fc"/><rect x="4" y="44.2" width="1" height="1.4" fill="#50a850"/><rect x="6" y="44.2" width="7" height="1.4" fill="#50a850"/><rect x="14" y="44.2" width="3" height="1.4" fill="#50a850"/><rect x="18" y="44.2" width="6" height="1.4" fill="#50a850"/><rect x="25" y="44.2" width="6" height="1.4" fill="#50a850"/><rect x="4" y="46.2" width="13" height="1.4" fill="#808080"/><rect x="18" y="46.2" width="1" height="1.4" fill="#808080"/><rect x="20" y="46.2" width="5" height="1.4" fill="#808080"/><rect x="25" y="46.2" width="1" height="1.4" fill="#5a78fc"/><rect x="26" y="46.2" width="9" height="1.4" fill="#c05a5a"/><rect x="35" y="46.2" width="1" height="1.4" fill="#5a78fc"/><rect x="36" y="46.2" width="4" height="1.4" fill="#808080"/><rect x="40" y="46.2" width="1" height="1.4" fill="#5a78fc"/><rect x="41" y="46.2" width="27" height="1.4" fill="#c05a5a"/><rect x="68" y="46.2" width="1" height="1.4" fill="#5a78fc"/><rect x="4" y="50.2" width="1" height="1.4" fill="#50a850"/><rect x="6" y="50.2" width="4" height="1.4" fill="#50a850"/><rect x="11" y="50.2" width="2" height="1.4" fill="#50a850"/><rect x="14" y="50.2" width="5" height="1.4" fill="#50a850"/><rect x="20" y="50.2" width="3" height="1.4" fill="#50a850"/><rect x="24" y="50.2" width="4" height="1.4" fill="#50a850"/><rect x="4" y="52.2" width="13" height="1.4" fill="#808080"/><rect x="18" y="52.2" width="1" height="1.4" fill="#808080"/><rect x="20" y="52.2" width="17" height="1.4" fill="#808080"/><rect x="37" y="52.2" width="1" height="1.4" fill="#5a78fc"/><rect x="38" y="52.2" width="10" height="1.4" fill="#808080"/><rect x="48" y="52.2" width="1" height="1.4" fill="#70b070"/><rect x="49" y="52.2" width="12" height="1.4" fill="#c05a5a"/><rect x="61" y="52.2" width="1" height="1.4" fill="#70b070"/><rect x="62" y="52.2" width="1" height="1.4" fill="#5a78fc"/><rect x="4" y="56.2" width="1" height="1.4" fill="#50a850"/><rect x="6" y="56.2" width="8" height="1.4" fill="#50a850"/><rect x="15" y="56.2" width="3" height="1.4" fill="#50a850"/><rect x="19" y="56.2" width="3" height="1.4" fill="#50a850"/><rect x="23" y="56.2" width="3" height="1.4" fill="#50a850"/><rect x="4" y="58.2" width="2" height="1.4" fill="#c050e0"/><rect x="7" y="58.2" width="13" height="1.4" fill="#808080"/><rect x="21" y="58.2" width="2" height="1.4" fill="#808080"/><rect x="24" y="58.2" width="14" height="1.4" fill="#808080"/><rect x="8" y="60.2" width="11" height="1.4" fill="#808080"/><rect x="19" y="60.2" width="1" height="1.4" fill="#5a78fc"/><rect x="20" y="60.2" width="4" height="1.4" fill="#c05a5a"/><rect x="25" y="60.2" width="2" height="1.4" fill="#c05a5a"/><rect x="28" y="60.2" width="6" height="1.4" fill="#c05a5a"/><rect x="34" y="60.2" width="1" height="1.4" fill="#5a78fc"/><rect x="8" y="62.2" width="6" height="1.4" fill="#c050e0"/><rect x="15" y="62.2" width="15" height="1.4" fill="#808080"/><rect x="30" y="62.2" width="1" height="1.4" fill="#5a78fc"/><rect x="31" y="62.2" width="6" height="1.4" fill="#c05a5a"/><rect x="37" y="62.2" width="1" height="1.4" fill="#808080"/><rect x="39" y="62.2" width="7" height="1.4" fill="#c05a5a"/><rect x="46" y="62.2" width="1" height="1.4" fill="#808080"/><rect x="48" y="62.2" width="5" height="1.4" fill="#808080"/><rect x="53" y="62.2" width="1" height="1.4" fill="#70b070"/><rect x="54" y="62.2" width="11" height="1.4" fill="#c05a5a"/><rect x="65" y="62.2" width="1" height="1.4" fill="#70b070"/><rect x="66" y="62.2" width="1" height="1.4" fill="#5a78fc"/><rect x="4" y="64.2" width="4" height="1.4" fill="#c050e0"/><rect x="8" y="64.2" width="1" height="1.4" fill="#808080"/><rect x="8" y="66.2" width="11" height="1.4" fill="#808080"/><rect x="19" y="66.2" width="1" height="1.4" fill="#5a78fc"/><rect x="20" y="66.2" width="4" height="1.4" fill="#c05a5a"/><rect x="25" y="66.2" width="3" height="1.4" fill="#c05a5a"/><rect x="29" y="66.2" width="6" height="1.4" fill="#c05a5a"/><rect x="35" y="66.2" width="1" height="1.4" fill="#5a78fc"/><rect x="8" y="68.2" width="6" height="1.4" fill="#c050e0"/><rect x="15" y="68.2" width="15" height="1.4" fill="#808080"/><rect x="30" y="68.2" width="1" height="1.4" fill="#5a78fc"/><rect x="31" y="68.2" width="6" height="1.4" fill="#c05a5a"/><rect x="37" y="68.2" width="1" height="1.4" fill="#808080"/><rect x="39" y="68.2" width="6" height="1.4" fill="#c05a5a"/><rect x="45" y="68.2" width="1" height="1.4" fill="#808080"/><rect x="47" y="68.2" width="5" height="1.4" fill="#808080"/><rect x="52" y="68.2" width="1" height="1.4" fill="#70b070"/><rect x="53" y="68.2" width="11" height="1.4" fill="#c05a5a"/><rect x="64" y="68.2" width="1" height="1.4" fill="#70b070"/><rect x="65" y="68.2" width="1" height="1.4" fill="#5a78fc"/></svg>
<div style="position:absolute;left:21px;top:823px;width:1598px;height:1px;background:#e5e5e5;"></div>
<div style="position:absolute;left:21px;top:824px;width:1598px;height:20px;background:#f8f8f8;"></div>
<div style="position:absolute;left:31px;top:845px;width:1577px;height:1px;background:#c9c9cf;"></div>
<svg style="position:absolute;left:36px;top:828px" width="14" height="13" fill="none" stroke="#424242" stroke-width="1"><circle cx="6.5" cy="6.5" r="5.8"/><path d="M4 4 L9 9 M9 4 L4 9"/></svg>
<div class="t" style="left:53.0px;top:828.84px;font-size:12px;line-height:12px;color:#3b3b3b;font-weight:normal;letter-spacing:0px;font-style:normal;">0</div>
<svg style="position:absolute;left:63px;top:827px" width="15" height="14" fill="none" stroke="#424242" stroke-width="1"><path d="M7 1.5 L13.5 12.5 H0.5 Z M7 5 V10"/></svg>
<div class="t" style="left:80.0px;top:828.84px;font-size:12px;line-height:12px;color:#3b3b3b;font-weight:normal;letter-spacing:0px;font-style:normal;">0</div>
<svg style="position:absolute;left:105px;top:829px" width="11" height="11" fill="none" stroke="#424242" stroke-width="1.1"><path d="M1.5 0.8 L9.5 5.3 L1.5 9.8 Z"/></svg>
<div class="t" style="left:120.0px;top:828.84px;font-size:12px;line-height:12px;color:#3b3b3b;font-weight:normal;letter-spacing:-0.1px;font-style:normal;">Amazon Q</div>
<div class="t" style="left:1177.5px;top:828.84px;font-size:12px;line-height:12px;color:#3b3b3b;font-weight:normal;letter-spacing:-0.3px;font-style:normal;">Ln 1, Col 1</div>
<div class="t" style="left:1248.5px;top:828.84px;font-size:12px;line-height:12px;color:#3b3b3b;font-weight:normal;letter-spacing:-0.5px;font-style:normal;">Spaces: 4</div>
<div class="t" style="left:1313.5px;top:828.84px;font-size:12px;line-height:12px;color:#3b3b3b;font-weight:normal;letter-spacing:-0.4px;font-style:normal;">UTF-8</div>
<div class="t" style="left:1361.5px;top:828.84px;font-size:12px;line-height:12px;color:#3b3b3b;font-weight:normal;letter-spacing:-1px;font-style:normal;">LF</div>
<div class="t" style="left:1389.0px;top:828.84px;font-size:12px;line-height:12px;color:#3b3b3b;font-weight:normal;letter-spacing:-0.1px;font-style:normal;">Python</div>
<div class="t" style="left:1459.5px;top:828.84px;font-size:12px;line-height:12px;color:#3b3b3b;font-weight:normal;letter-spacing:-0.25px;font-style:normal;">Lambda</div>
<div class="t" style="left:1517.5px;top:828.84px;font-size:12px;line-height:12px;color:#3b3b3b;font-weight:normal;letter-spacing:-0.35px;font-style:normal;">Layout: US</div>
<svg style="position:absolute;left:1442px;top:827px" width="15" height="15" fill="none" stroke="#424242" stroke-width="1"><rect x="1.5" y="1.5" width="12" height="12" rx="1"/><path d="M4 5 L6.5 7.5 L4 10 M7.5 10.5 H11"/></svg>
<svg style="position:absolute;left:1590px;top:827px" width="14" height="15" fill="none" stroke="#424242" stroke-width="1"><path d="M2 11 H12 L10.8 9 V5.5 A3.8 3.8 0 0 0 3.2 5.5 V9 Z M5.5 11.5 A1.6 1.6 0 0 0 8.5 11.5"/></svg>
<div style="position:absolute;left:65.5px;top:789px;width:216px;height:28px;border:6px solid #e31c1e"></div>
<svg style="position:absolute;left:0;top:690px" width="100" height="100"><path d="M14.6 11 L18.6 7.6 L62.9 64.6 L72.4 57.3 L78.6 89.6 L48.7 75.4 L57.6 69.8 Z" fill="#e31c1e"/></svg>
</body></html>
